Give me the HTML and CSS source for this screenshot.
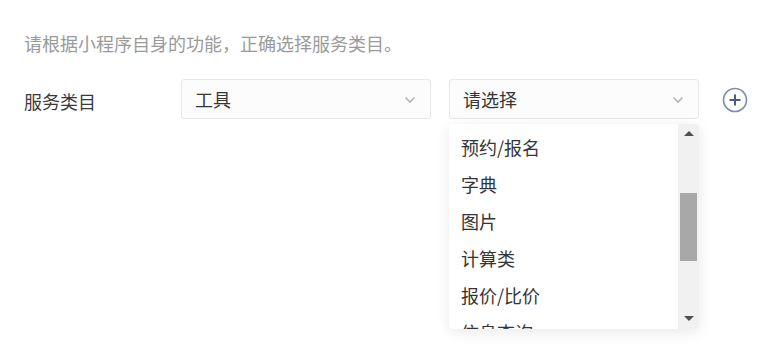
FILE: index.html
```html
<!DOCTYPE html>
<html lang="zh-CN">
<head>
    <meta charset="UTF-8">
    <title>服务类目</title>
    <link rel="stylesheet" href="styles.css">
</head>
<body>
    <div class="page">
        <p class="tips">请根据小程序自身的功能，正确选择服务类目。</p>
        <div class="form-row">
            <label class="form-label">服务类目</label>
            <div class="select">
                <span class="select-text">工具</span>
                <svg class="arrow" width="12" height="8" viewBox="0 0 12 8"><path d="M1.5 1.5 L6 6 L10.5 1.5" fill="none" stroke="#b4b4b4" stroke-width="1.6"/></svg>
            </div>
            <div class="select select-open">
                <span class="select-text">请选择</span>
                <svg class="arrow" width="12" height="8" viewBox="0 0 12 8"><path d="M1.5 1.5 L6 6 L10.5 1.5" fill="none" stroke="#b4b4b4" stroke-width="1.6"/></svg>
                <div class="dropdown">
                    <ul class="options">
                        <li>预约/报名</li>
                        <li>字典</li>
                        <li>图片</li>
                        <li>计算类</li>
                        <li>报价/比价</li>
                        <li>信息查询</li>
                    </ul>
                    <div class="scrollbar">
                        <span class="scroll-btn up"></span>
                        <div class="scroll-track"><div class="scroll-thumb"></div></div>
                        <span class="scroll-btn down"></span>
                    </div>
                </div>
            </div>
            <svg class="add-btn" width="26" height="26" viewBox="0 0 26 26">
                <circle cx="13" cy="13" r="11.5" fill="none" stroke="#7d8bab" stroke-width="1.6"/>
                <path d="M13 7.5 V18.5 M7.5 13 H18.5" stroke="#4c5b85" stroke-width="2"/>
            </svg>
        </div>
    </div>
</body>
</html>
```

FILE: styles.css
```css
html, body {
    margin: 0;
    min-height: 100%;
    height: 100%;
}
body {
    font-family: "Noto Sans CJK SC", "Noto Sans", sans-serif;
    background-color: #fff;
    color: #353535;
}
.page {
    box-sizing: border-box;
    min-height: 364px;
    padding: 0 24px;
}
.tips {
    margin: 0;
    padding-top: 30px;
    font-size: 18px;
    line-height: 26px;
    color: #9a9a9a;
}
.form-row {
    display: flex;
    align-items: center;
    margin-top: 23px;
}
.form-label {
    width: 157px;
    font-size: 18px;
    color: #3a3a3a;
    padding-top: 4px;
}
.select {
    position: relative;
    box-sizing: border-box;
    width: 250px;
    height: 40px;
    margin-right: 18px;
    padding: 0 14px 0 13px;
    display: flex;
    align-items: center;
    justify-content: space-between;
    border: 1px solid #e6e8eb;
    border-radius: 3px;
    background-color: #fcfcfc;
    font-size: 18px;
}
.select-text {
    color: #353535;
}
.arrow {
    margin-top: 1px;
}
.add-btn {
    margin-left: 5px;
    margin-top: 1px;
}
.dropdown {
    position: absolute;
    left: -1px;
    top: 44px;
    width: 250px;
    height: 205px;
    display: flex;
    background-color: #fff;
    border-radius: 4px;
    overflow: hidden;
    box-shadow: 0 3px 14px rgba(0, 0, 0, 0.09);
    z-index: 10;
}
.options {
    flex: 1;
    list-style: none;
    margin: 0;
    padding: 5px 0 0;
    overflow: hidden;
}
.options li {
    height: 37px;
    line-height: 37px;
    padding-left: 12px;
    font-size: 18px;
    color: #353535;
}
.scrollbar {
    width: 21px;
    display: flex;
    flex-direction: column;
    align-items: center;
    background-color: #f1f1f1;
}
.scroll-btn {
    width: 0;
    height: 0;
    border-left: 5px solid transparent;
    border-right: 5px solid transparent;
}
.scroll-btn.up {
    margin-top: 7px;
    border-bottom: 5px solid #505050;
}
.scroll-btn.down {
    margin-bottom: 8px;
    border-top: 5px solid #505050;
}
.scroll-track {
    flex: 1;
    width: 100%;
    padding: 57px 2px 0;
    box-sizing: border-box;
}
.scroll-thumb {
    height: 68px;
    background-color: #a8a8a8;
}
```
